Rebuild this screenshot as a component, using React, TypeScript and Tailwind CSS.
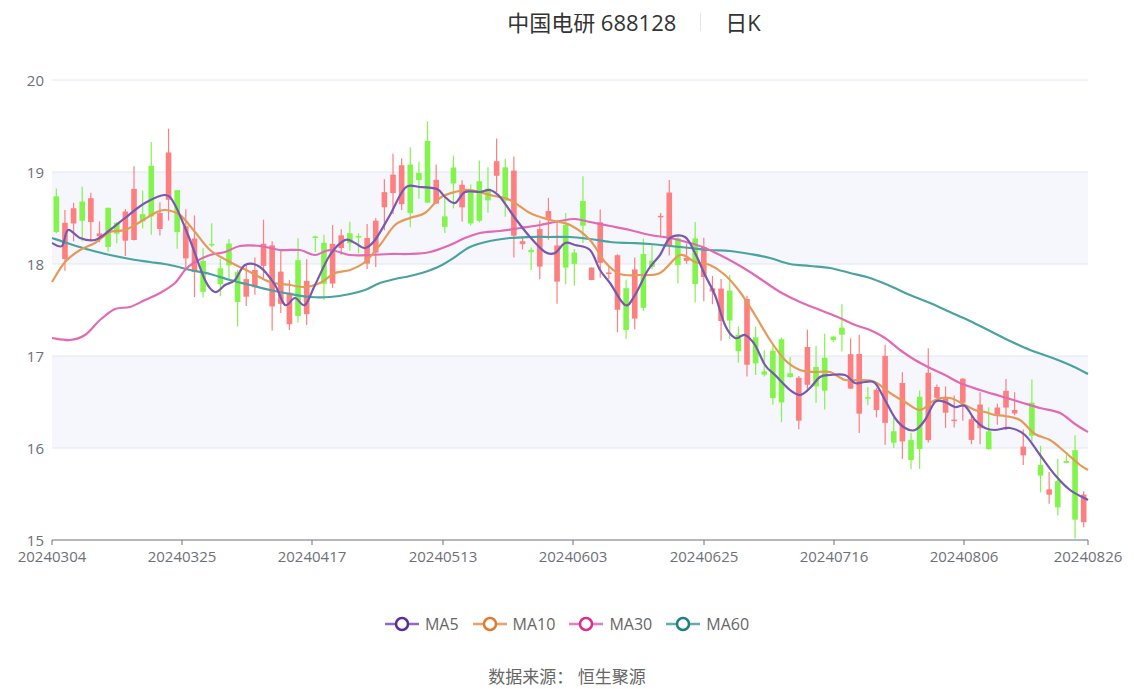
import React from "react";

type P = [number, number];
const MA5: P[] = [[52,243],[62,246],[68,230],[80,238],[95,240],[110,230],[125,218],[145,203],[165,195],[175,205],[190,240],[205,280],[215,292],[225,285],[235,280],[245,265],[260,267],[275,285],[285,305],[295,298],[305,305],[315,285],[330,255],[345,240],[355,243],[365,248],[375,240],[390,215],[405,188],[420,187],[437,189],[445,197],[455,203],[465,192],[480,192],[490,190],[500,197],[515,218],[530,237],[545,252],[555,253],[565,243],[575,245],[590,250],[600,270],[610,283],[625,305],[635,295],[648,270],[660,255],[670,238],[685,237],[695,253],[705,275],[715,295],[725,325],[735,338],[745,335],[755,345],[765,365],[775,375],[790,390],[800,395],[810,388],[820,377],[830,375],[845,375],[855,383],[865,382],[875,383],[885,400],[895,418],[905,428],[915,430],[925,420],[935,402],[945,402],[955,407],[965,406],[975,420],[985,428],[995,430],[1010,428],[1025,435],[1040,455],[1055,475],[1070,490],[1088,500]];
const MA10: P[] = [[52,282],[65,262],[80,250],[95,243],[110,232],[125,230],[140,222],[155,213],[165,210],[180,215],[195,232],[210,250],[230,262],[250,272],[270,282],[290,285],[305,287],[320,283],[335,273],[350,270],[365,262],[380,245],[395,225],[410,218],[425,213],[440,198],[455,192],[470,190],[490,195],[510,200],[530,213],[550,220],[570,225],[590,240],[605,262],[620,274],[640,275],[660,273],[680,255],[695,262],[710,265],[725,275],[740,292],[755,315],[770,340],[785,360],[800,370],[815,372],[830,372],[845,380],[860,380],[875,382],[890,393],[905,402],[920,410],[935,400],[950,398],[965,405],[975,410],[985,412],[995,415],[1005,416],[1020,420],[1035,434],[1050,440],[1065,452],[1080,465],[1088,470]];
const MA30: P[] = [[52,338],[70,340],[85,335],[100,320],[115,309],[130,307],[145,300],[160,293],[175,283],[185,270],[195,262],[210,255],[225,252],[240,246],[260,246],[280,250],[300,250],[315,255],[330,250],[350,255],[370,255],[390,254],[410,254],[430,252],[450,245],[465,238],[480,233],[500,231],[520,228],[540,225],[560,221],[575,219],[590,222],[610,226],[630,230],[650,235],[670,238],[690,243],[705,248],[720,255],[735,263],[750,272],[765,282],[780,292],[800,302],[820,310],[840,318],[855,325],[870,330],[885,338],[900,350],[915,360],[930,368],[945,375],[960,383],[980,390],[1000,396],[1020,402],[1040,408],[1060,413],[1075,424],[1088,432]];
const MA60: P[] = [[52,238],[70,244],[90,250],[110,255],[130,259],[150,262],[170,265],[190,270],[210,274],[230,280],[250,285],[270,290],[290,294],[310,297],[330,297],[350,294],[365,290],[380,283],[395,279],[410,276],[425,272],[440,266],[455,257],[470,247],[490,241],[510,238],[530,237],[550,237],[570,237],[590,239],[610,242],[630,243],[650,244],[670,246],[690,248],[710,250],[730,251],[750,254],[770,258],[790,264],[810,266],[830,268],[850,273],[870,278],[890,286],[910,295],[930,303],[950,312],[970,321],[990,331],[1010,341],[1030,350],[1050,357],[1070,365],[1088,374]];

function smooth(p: P[]) {
  let d = `M${p[0][0]},${p[0][1]}`;
  for (let i = 0; i < p.length - 1; i++) {
    const a = p[Math.max(0, i - 1)], b = p[i], c = p[i + 1], e = p[Math.min(p.length - 1, i + 2)];
    const c1x = b[0] + (c[0] - a[0]) / 6, c1y = b[1] + (c[1] - a[1]) / 6;
    const c2x = c[0] - (e[0] - b[0]) / 6, c2y = c[1] - (e[1] - b[1]) / 6;
    d += ` C${c1x.toFixed(1)},${c1y.toFixed(1)} ${c2x.toFixed(1)},${c2y.toFixed(1)} ${c[0]},${c[1]}`;
  }
  return d;
}
function interp(p: P[], x: number) {
  for (let i = 0; i < p.length - 1; i++) {
    if (x <= p[i + 1][0]) {
      const t = (x - p[i][0]) / (p[i + 1][0] - p[i][0]);
      return p[i][1] + t * (p[i + 1][1] - p[i][1]);
    }
  }
  return p[p.length - 1][1];
}
let seed = 11;
const rnd = () => { seed = (seed * 16807) % 2147483647; return seed / 2147483647; };
const N = 120;
const step = 1036 / N;
const candles = Array.from({ length: N }, (_, i) => {
  const x = 52 + step / 2 + i * step;
  const c = interp(MA5, x) - 8;
  const o = c + (rnd() - 0.5) * 80;
  const cl = c + (rnd() - 0.5) * 80;
  const top = Math.min(o, cl), bot = Math.max(o, cl);
  const hi = top - rnd() * 25, lo = bot + rnd() * 25;
  const up = cl < o;
  return { x, top, bot: Math.max(bot, top + 1.5), hi, lo, up };
});
const dates = ["20240304","20240325","20240417","20240513","20240603","20240625","20240716","20240806","20240826"];
const dx = [52,182,312,443,573,704,834,964,1088];

export default function App() {
  const font = { fontFamily: '"Open Sans","Noto Sans CJK SC",sans-serif' };
  return (
    <div className="w-[1134px] h-[689px] bg-white overflow-hidden" style={font}>
      <div className="h-[44px] flex items-center justify-center pl-[134px] text-[22px] text-[#333]">
        <span>中国电研 688128</span>
        <span className="mx-[24px] w-px h-[18px] bg-[#e5e5e5]" />
        <span>日K</span>
      </div>
      <svg width="1134" height="556" viewBox="0 44 1134 556" className="block">
        <rect x="52" y="172" width="1036" height="92" fill="#f5f7fc" />
        <rect x="52" y="356" width="1036" height="92" fill="#f5f7fc" />
        {[20,19,18,17,16].map((v, i) => (
          <line key={v} x1="52" x2="1088" y1={80 + i * 92} y2={80 + i * 92} stroke="#e0e6f1" />
        ))}
        {[20,19,18,17,16,15].map((v, i) => (
          <text key={v} x="44" y={80 + i * 92 + 6} textAnchor="end" fontSize="15" fill="#6e7079">{v}</text>
        ))}
        {candles.map((c, i) => {
          const col = c.up ? "#fd7f7f" : "#83f44b";
          return (
            <g key={i}>
              <line x1={c.x} x2={c.x} y1={c.hi} y2={c.lo} stroke={col} strokeWidth="1.2" />
              <rect x={c.x - 2.8} y={c.top} width="5.6" height={c.bot - c.top} fill={col} />
            </g>
          );
        })}
        <path d={smooth(MA60)} fill="none" stroke="#4aa3a1" strokeWidth="2.2" />
        <path d={smooth(MA30)} fill="none" stroke="#e26ab4" strokeWidth="2.2" />
        <path d={smooth(MA10)} fill="none" stroke="#e69a5a" strokeWidth="2.2" />
        <path d={smooth(MA5)} fill="none" stroke="#7a58b0" strokeWidth="2.2" />
        <line x1="52" x2="1088" y1="540" y2="540" stroke="#6e7079" />
        {dx.map((x, i) => (
          <g key={i}>
            <line x1={x} x2={x} y1="540" y2="545" stroke="#6e7079" />
            <text x={x} y="562" textAnchor="middle" fontSize="15" fill="#6e7079">{dates[i]}</text>
          </g>
        ))}
      </svg>
      <div className="h-[48px] flex items-center justify-center gap-[14px] text-[16px] text-[#666]">
        {[["MA5","#5b2d9a","#8b6cc0"],["MA10","#e07b2e","#eaa06a"],["MA30","#d8308c","#e47cb9"],["MA60","#1e8080","#62aeae"]].map(([n, c, l]) => (
          <div key={n} className="flex items-center gap-[6px]">
            <svg width="34" height="16" viewBox="0 0 34 16">
              <line x1="0" x2="34" y1="8" y2="8" stroke={l} strokeWidth="2.5" />
              <circle cx="17" cy="8" r="6" fill="white" stroke={c} strokeWidth="2.5" />
            </svg>
            <span>{n}</span>
          </div>
        ))}
      </div>
      <div className="pt-[16px] text-center text-[17px] text-[#666]">数据来源：&nbsp;恒生聚源</div>
    </div>
  );
}
